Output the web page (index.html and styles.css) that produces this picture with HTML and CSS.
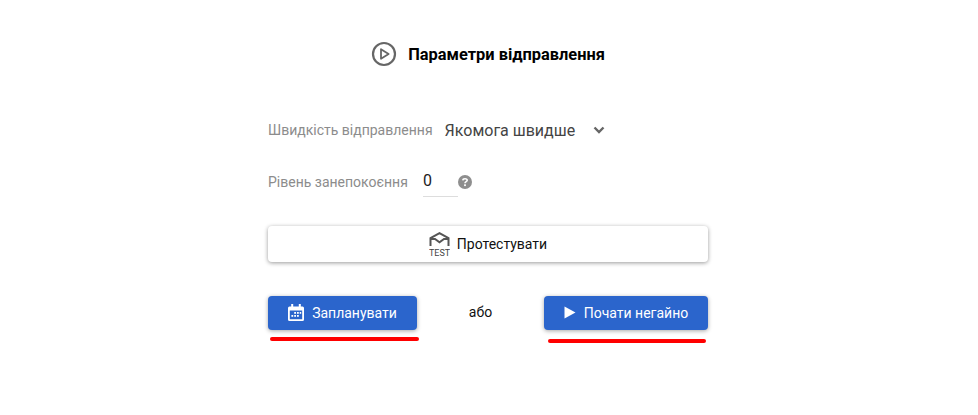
FILE: index.html
```html
<!DOCTYPE html>
<html lang="uk">
<head>
  <meta charset="UTF-8">
  <title>Параметри відправлення</title>
  <link rel="stylesheet" href="styles.css">
</head>
<body>

  <main class="panel">
    <h1 class="title">
      <svg class="title-icon" width="26" height="26" viewBox="0 0 26 26">
        <circle cx="13" cy="13" r="11" fill="none" stroke="#666" stroke-width="2.2"/>
        <path d="M10 8.2 L17.6 13 L10 17.8 Z" fill="none" stroke="#666" stroke-width="1.8" stroke-linejoin="round"/>
      </svg>
      Параметри відправлення
    </h1>

    <div class="row row-speed">
      <span class="label">Швидкість відправлення</span>
      <span class="select-value">Якомога швидше</span>
      <svg class="chevron" width="12" height="8" viewBox="0 0 12 8">
        <path d="M1.5 1.5 L6 6 L10.5 1.5" fill="none" stroke="#666" stroke-width="2.4"/>
      </svg>
    </div>

    <div class="row row-level">
      <span class="label">Рівень занепокоєння</span>
      <span class="number-input">0</span>
      <svg class="help" width="14" height="14" viewBox="0 0 14 14">
        <circle cx="7" cy="7" r="7" fill="#8e8e8e"/>
        <path d="M4.8 5.4 C4.9 3.2 9.2 3.2 9.2 5.3 C9.2 6.7 7 6.6 7 8.3" fill="none" stroke="#fff" stroke-width="1.6"/>
        <rect x="6.1" y="9.3" width="1.8" height="1.8" fill="#fff"/>
      </svg>
    </div>

    <button class="btn-test" type="button">
      <svg width="21" height="24" viewBox="0 0 21 24">
        <path d="M1.5 14 V6.2 L10.5 1.2 L19.5 6.2 V14" fill="none" stroke="#555" stroke-width="2"/>
        <path d="M1.5 7 L6 7 L10.5 10.2 L15 7 L19.5 7" fill="none" stroke="#555" stroke-width="2"/>
        <text x="10.5" y="23.5" text-anchor="middle" class="test-word">TEST</text>
      </svg>
      Протестувати
    </button>

    <div class="actions">
      <div class="action action-plan">
        <button class="btn-primary btn-plan" type="button">
          <svg width="16" height="17" viewBox="0 0 16 17">
            <path d="M1.5 2.5 H14.5 A1.5 1.5 0 0 1 16 4 V15.5 A1.5 1.5 0 0 1 14.5 17 H1.5 A1.5 1.5 0 0 1 0 15.5 V4 A1.5 1.5 0 0 1 1.5 2.5 Z M1.8 6.5 V15.2 H14.2 V6.5 Z" fill="#fff" fill-rule="evenodd"/>
            <rect x="3.2" y="0" width="2" height="4" fill="#fff"/>
            <rect x="10.8" y="0" width="2" height="4" fill="#fff"/>
            <rect x="6.2" y="8" width="1.8" height="1.8" fill="#fff"/>
            <rect x="9" y="8" width="1.8" height="1.8" fill="#fff"/>
            <rect x="11.7" y="8" width="1.5" height="1.8" fill="#fff"/>
            <rect x="3.4" y="11" width="1.8" height="1.8" fill="#fff"/>
            <rect x="6.2" y="11" width="1.8" height="1.8" fill="#fff"/>
            <rect x="9" y="11" width="1.8" height="1.8" fill="#fff"/>
          </svg>
          Запланувати
        </button>
        <span class="mark mark-plan"></span>
      </div>

      <span class="or">або</span>

      <div class="action action-start">
        <button class="btn-primary btn-start" type="button">
          <svg width="12" height="13" viewBox="0 0 12 13">
            <path d="M0.5 0.5 L11.5 6.5 L0.5 12.5 Z" fill="#fff"/>
          </svg>
          Почати негайно
        </button>
        <span class="mark mark-start"></span>
      </div>
    </div>
  </main>

</body>
</html>
```

FILE: styles.css
```css
* {
  margin: 0;
  padding: 0;
  box-sizing: border-box;
}

body {
  background-color: #fff;
  font-family: Roboto, 'Liberation Sans', sans-serif;
  color: #000;
  height: 415px;
  overflow: hidden;
}

.panel {
  width: 440px;
  margin-left: 268px;
  padding-top: 41px;
}

.title {
  display: flex;
  align-items: center;
  justify-content: center;
  gap: 11px;
  height: 26px;
  font-size: 16.4px;
  font-weight: 700;
  color: #000;
}

.row {
  display: flex;
  align-items: center;
}

.row-speed {
  margin-top: 49px;
  height: 28px;
}

.row-level {
  margin-top: 23px;
  height: 30px;
}

.label {
  font-size: 14px;
  color: #8c8c8c;
}

.select-value {
  margin-left: 12px;
  font-size: 16px;
  color: #444;
}

.chevron {
  margin-left: 18px;
}

.number-input {
  width: 35px;
  height: 30px;
  margin-left: 15px;
  font-size: 16px;
  line-height: 28px;
  color: #222;
  border-bottom: 1px solid #ddd;
}

.btn-test {
  display: flex;
  align-items: center;
  justify-content: center;
  gap: 7px;
  width: 100%;
  height: 36px;
  margin-top: 29px;
  padding-bottom: 1px;
  background-color: #fff;
  border: none;
  border-radius: 4px;
  box-shadow: 0 1px 4px rgba(0, 0, 0, 0.4);
  font-family: inherit;
  font-size: 14px;
  color: #111;
}

.test-word {
  font-family: Roboto, sans-serif;
  font-size: 9px;
  fill: #444;
}

.actions {
  display: flex;
  align-items: flex-start;
  justify-content: space-between;
  margin-top: 34px;
}

.action {
  position: relative;
}

.btn-primary {
  display: flex;
  align-items: center;
  justify-content: center;
  height: 34px;
  padding-bottom: 1px;
  background-color: #2b65cc;
  border: none;
  border-radius: 4px;
  box-shadow: 0 1px 4px rgba(0, 0, 0, 0.35);
  font-family: inherit;
  font-size: 14px;
  font-weight: 400;
  color: #fff;
}

.btn-plan {
  width: 149px;
  gap: 8px;
}

.btn-start {
  width: 164px;
  gap: 8px;
}

.or {
  font-size: 14px;
  line-height: 32px;
  color: #111;
}

.mark {
  position: absolute;
  height: 4px;
  background-color: #f00;
  border-radius: 2px;
}

.mark-plan {
  left: 2px;
  top: 41px;
  width: 149px;
}

.mark-start {
  left: 4px;
  top: 43px;
  width: 158px;
}
```
